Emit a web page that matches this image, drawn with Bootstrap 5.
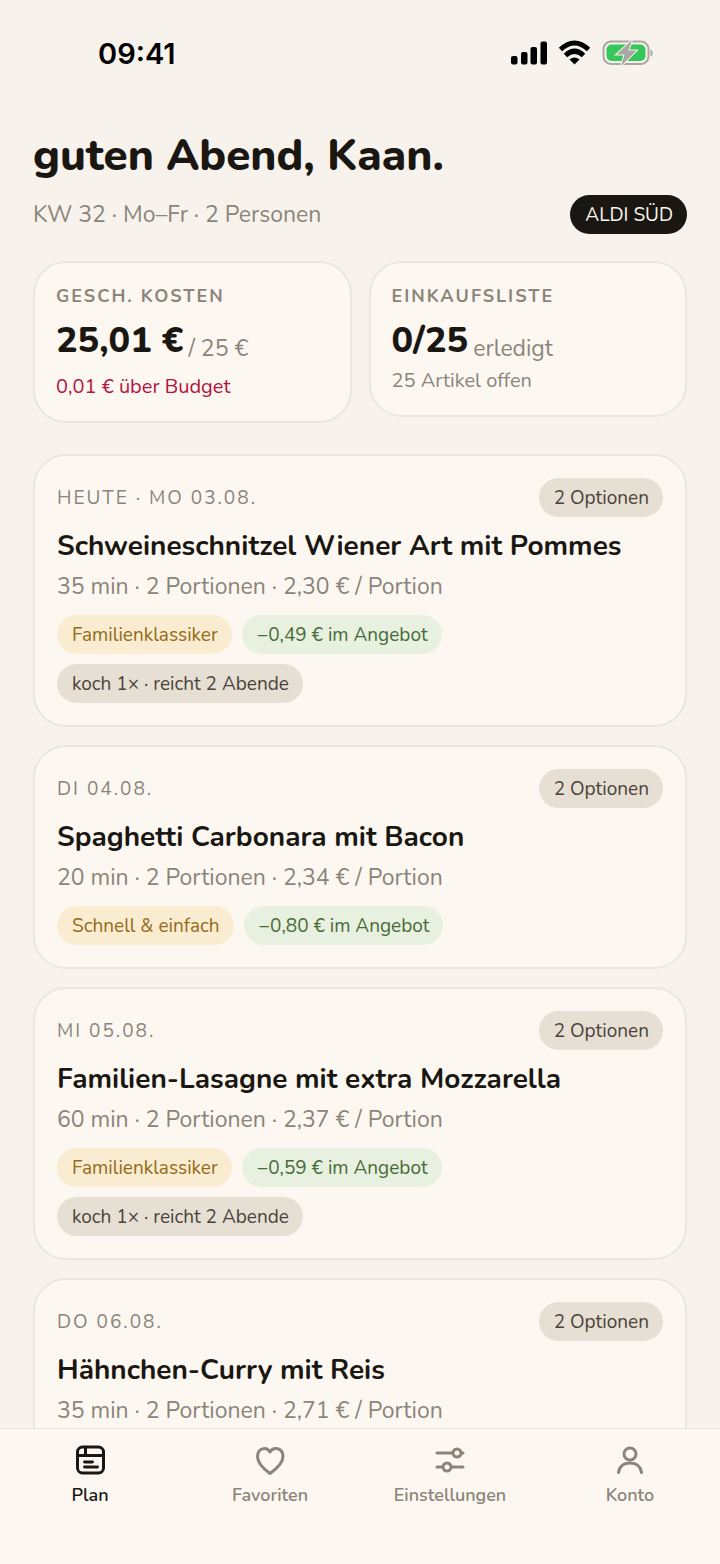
<!DOCTYPE html>
<html lang="de">
<head>
<meta charset="utf-8">
<meta name="viewport" content="width=device-width, initial-scale=1">
<title>Wochenplan</title>
<link href="https://cdn.jsdelivr.net/npm/bootstrap@5.3.0/dist/css/bootstrap.min.css" rel="stylesheet">
<style>
  :root { --ink: #1a1712; --muted: #8b847a; --line: #ebe6dd; --paper: #fcf8f1; --sand: #e6dfd4; }
  body { background: #f7f3ec; color: var(--ink); font-family: Nunito, Lato, sans-serif; font-size: 23px; line-height: 32px; }
  .status { height: 108px; padding: 0 66px 0 98px; color: #000; }
  .status svg { margin-bottom: 4px; }
  .clock { font: 600 29px/36px Inter, sans-serif; }
  .screen { padding: 22px 33px 18px; overflow-y: auto; scrollbar-width: none; }
  .screen::-webkit-scrollbar { display: none; }
  h1 { font-size: 44px; line-height: 52px; font-weight: 800; margin-bottom: 13px; }
  .soft { color: var(--muted); }
  .pill { border: 0; border-radius: 20px; padding: 1px 14px 0 15px; font-size: 19px; line-height: 38px; background: var(--sand); color: #4b433a; white-space: nowrap; }
  .pill-dark { background: var(--ink); color: var(--paper); }
  .pill-gold { background: #f9ecd0; color: #946a17; }
  .pill-green { background: #e8f0df; color: #476b38; }
  .panel { background: var(--paper); border: 2px solid var(--line); border-radius: 33px; }
  .stats { gap: 17px; margin: 27px 0 31px; }
  .stat { padding: 21px; }
  .stat h2 { font-size: 18px; line-height: 24px; font-weight: 700; letter-spacing: 2px; margin-bottom: 11px; }
  .stat-row { gap: 5px; height: 44px; }
  .stat-value { font-size: 36px; line-height: 44px; font-weight: 800; }
  .stat-unit { line-height: 28px; }
  .stat-note { font-size: 20px; line-height: 26px; margin-top: 5px; }
  .over { color: #b3123f; margin-top: 11px; }
  .meals { gap: 18px; }
  .meal { padding: 22px; min-height: 224px; }
  .day { font-size: 19px; letter-spacing: 2px; }
  .meal h3 { font-size: 28px; line-height: 36px; font-weight: 700; margin: 11px 0 7px; }
  .chips { gap: 10px; margin-top: 12px; }
  .tabs { height: 136px; background: var(--paper); border-top: 1px solid var(--line); padding-top: 14px; }
  .tabs a { color: var(--muted); font-size: 18px; line-height: 26px; font-weight: 600; gap: 5px; }
  .tabs a.active { color: var(--ink); }
  .tabs svg { fill: none; stroke: currentColor; stroke-width: 3; stroke-linecap: round; stroke-linejoin: round; }
</style>
</head>
<body class="vh-100 d-flex flex-column overflow-hidden">
<header class="status d-flex flex-shrink-0 align-items-center justify-content-between">
  <span class="clock">09:41</span>
  <svg width="144" height="28" viewBox="0 0 144 28" aria-label="Mobilfunk, WLAN, Akku lädt">
    <rect x="1" y="18" width="6.500" height="8.500" rx="2"/><rect x="11" y="14" width="6.500" height="12.500" rx="2"/><rect x="20.500" y="9" width="6.500" height="17.500" rx="2"/><rect x="30.500" y="3.500" width="6.500" height="23" rx="2"/>
    <g fill="none" stroke="#000" stroke-width="5"><path d="M50.500 11.500Q64.500-1.500 78.500 11.500"/><path d="M55.500 17.500Q64.500 9 73.500 17.500"/></g>
    <path d="M59.500 21.500Q64.500 17.500 69.500 21.500L64.500 26.500Z"/>
    <rect x="93.500" y="3.500" width="45" height="22.500" rx="7.500" fill="none" stroke="#aaa6a0" stroke-width="2"/>
    <path d="M140.500 11Q145 15 140.500 19Z" fill="#aaa6a0"/>
    <rect x="96.500" y="6.500" width="39" height="16.500" rx="5" fill="#34c759"/>
    <path d="M122 2L106.500 16.500H114.500L111 28L126.500 12.500H118.500Z" fill="#aaa6a0" stroke="#f7f3ec" stroke-width="2" paint-order="stroke"/>
  </svg>
</header>

<main class="screen flex-grow-1">
  <h1>guten Abend, Kaan.</h1>
  <div class="d-flex justify-content-between align-items-center">
    <span class="soft">KW 32 · Mo–Fr · 2 Personen</span>
    <button type="button" class="pill pill-dark">ALDI SÜD</button>
  </div>

  <section class="stats d-flex align-items-start">
    <div class="panel stat flex-fill w-50">
      <h2 class="soft">GESCH. KOSTEN</h2>
      <div class="stat-row d-flex align-items-end"><span class="stat-value">25,01 €</span><span class="stat-unit soft">/ 25 €</span></div>
      <div class="stat-note over">0,01 € über Budget</div>
    </div>
    <div class="panel stat flex-fill w-50">
      <h2 class="soft">EINKAUFSLISTE</h2>
      <div class="stat-row d-flex align-items-end"><span class="stat-value">0/25</span><span class="stat-unit soft">erledigt</span></div>
      <div class="stat-note soft">25 Artikel offen</div>
    </div>
  </section>

  <section class="meals d-flex flex-column">
    <article class="panel meal">
      <div class="d-flex justify-content-between align-items-center"><span class="day soft">HEUTE · MO 03.08.</span><button type="button" class="pill">2 Optionen</button></div>
      <h3>Schweineschnitzel Wiener Art mit Pommes</h3>
      <div class="soft">35 min · 2 Portionen · 2,30 € / Portion</div>
      <div class="chips d-flex flex-wrap"><span class="pill pill-gold">Familienklassiker</span><span class="pill pill-green">−0,49 € im Angebot</span><span class="pill">koch 1× · reicht 2 Abende</span></div>
    </article>
    <article class="panel meal">
      <div class="d-flex justify-content-between align-items-center"><span class="day soft">DI 04.08.</span><button type="button" class="pill">2 Optionen</button></div>
      <h3>Spaghetti Carbonara mit Bacon</h3>
      <div class="soft">20 min · 2 Portionen · 2,34 € / Portion</div>
      <div class="chips d-flex flex-wrap"><span class="pill pill-gold">Schnell &amp; einfach</span><span class="pill pill-green">−0,80 € im Angebot</span></div>
    </article>
    <article class="panel meal">
      <div class="d-flex justify-content-between align-items-center"><span class="day soft">MI 05.08.</span><button type="button" class="pill">2 Optionen</button></div>
      <h3>Familien-Lasagne mit extra Mozzarella</h3>
      <div class="soft">60 min · 2 Portionen · 2,37 € / Portion</div>
      <div class="chips d-flex flex-wrap"><span class="pill pill-gold">Familienklassiker</span><span class="pill pill-green">−0,59 € im Angebot</span><span class="pill">koch 1× · reicht 2 Abende</span></div>
    </article>
    <article class="panel meal">
      <div class="d-flex justify-content-between align-items-center"><span class="day soft">DO 06.08.</span><button type="button" class="pill">2 Optionen</button></div>
      <h3>Hähnchen-Curry mit Reis</h3>
      <div class="soft">35 min · 2 Portionen · 2,71 € / Portion</div>
    </article>
  </section>
</main>

<nav class="tabs row g-0 flex-shrink-0 align-items-start">
  <a href="#plan" class="active col d-flex flex-column align-items-center text-decoration-none" aria-current="page">
    <svg width="34" height="34" viewBox="0 0 34 34"><rect x="4.500" y="4" width="26" height="26" rx="5"/><path d="M4.500 12.500H30.500M12.500 4V12.500" stroke-linecap="butt"/><path d="M11.500 19H19.500M11.500 24H24.500" stroke-width="2.800"/></svg>
    Plan</a>
  <a href="#favoriten" class="col d-flex flex-column align-items-center text-decoration-none">
    <svg width="34" height="34" viewBox="0 0 34 34"><path d="M17 30.500C10 25.500 4.500 19.500 4.500 13.500C4.500 5 13.500 3 17 9C20.500 3 30 5 30 13.500C30 19.500 24 25.500 17 30.500Z"/></svg>
    Favoriten</a>
  <a href="#einstellungen" class="col d-flex flex-column align-items-center text-decoration-none">
    <svg width="34" height="34" viewBox="0 0 34 34"><path d="M4 10H19.500M28.500 10H30M4 24H9.500M18.500 24H30"/><circle cx="24" cy="10" r="4"/><circle cx="14" cy="24" r="4"/></svg>
    Einstellungen</a>
  <a href="#konto" class="col d-flex flex-column align-items-center text-decoration-none">
    <svg width="34" height="34" viewBox="0 0 34 34"><circle cx="17" cy="11" r="6"/><path d="M5.500 29.500C6.500 23 11 20 17 20S27.500 23 28.500 29.500"/></svg>
    Konto</a>
</nav>
<script src="https://cdn.jsdelivr.net/npm/bootstrap@5.3.0/dist/js/bootstrap.bundle.min.js"></script>
</body>
</html>
